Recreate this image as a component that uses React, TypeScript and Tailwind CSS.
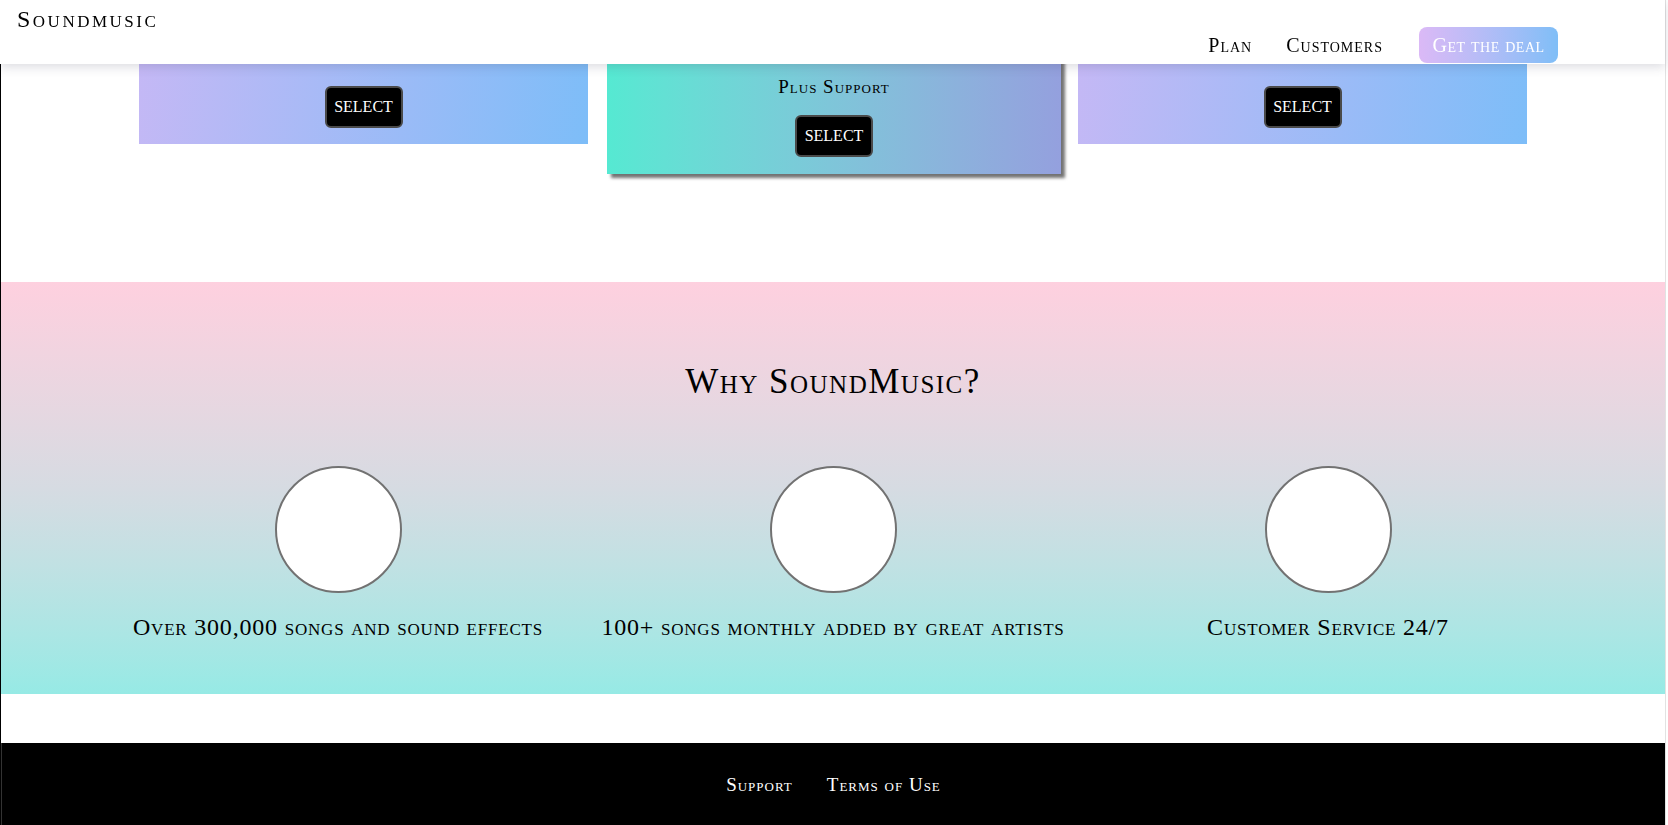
import React from 'react';

const serif = "font-['Liberation_Serif','DejaVu_Serif',serif] [font-variant:small-caps]";

const features = [
  'Over 300,000 songs and sound effects',
  '100+ songs monthly added by great artists',
  'Customer Service 24/7',
];

const SelectButton = () => (
  <button className="h-[42px] w-[78px] rounded-md border-2 border-[#4a4a4a] bg-black text-[16px] uppercase leading-none text-white">
    select
  </button>
);

const Header = () => (
  <header className="fixed left-0 top-0 z-10 flex h-16 w-[1665px] items-start justify-between bg-white pl-[17px] pr-[107px] shadow-[0_3px_10px_rgba(60,60,90,0.18)]">
    <div className="mt-[3px] text-[24px] leading-8 tracking-[2.5px] text-black">Soundmusic</div>
    <nav className="mt-[27px] flex items-center">
      <a className="text-[20px] leading-9 tracking-[1px] text-black">Plan</a>
      <a className="ml-[34px] text-[20px] leading-9 tracking-[1px] text-black">Customers</a>
      <a className="ml-9 flex h-9 w-[139px] items-center justify-center rounded-lg bg-gradient-to-r from-[#dbb9f6] to-[#7fbef7] text-[20px] tracking-[0.5px] text-white">
        Get the deal
      </a>
    </nav>
  </header>
);

const PlanCards = () => (
  <section className="flex items-start justify-center">
    <div className="flex h-[144px] w-[449px] flex-col items-center justify-end bg-[linear-gradient(100deg,#c6b8f5,#7dbdf8)] pb-4">
      <p className="mb-[22px] text-[17px] leading-5">Unlimited Songs</p>
      <SelectButton />
    </div>
    <div className="ml-[19px] flex h-[174px] w-[454px] flex-col items-center justify-end bg-gradient-to-r from-[#55e9d2] to-[#94a0de] pb-[17px] shadow-[4px_4px_3px_rgba(0,0,0,0.55)]">
      <p className="mb-3 text-[19px] leading-5 tracking-[1px]">Unlimited Songs and Playlists</p>
      <p className="mb-[18px] text-[19px] leading-5 tracking-[1px]">Plus Support</p>
      <SelectButton />
    </div>
    <div className="ml-[17px] flex h-[144px] w-[449px] flex-col items-center justify-end bg-[linear-gradient(100deg,#c6b8f5,#7dbdf8)] pb-4">
      <SelectButton />
    </div>
  </section>
);

const WhySection = () => (
  <section className="mt-[108px] h-[412px] bg-gradient-to-b from-[#fed0df] via-[#d6dbe2] to-[#96eae5] pt-[80px]">
    <h2 className="text-center text-[35px] leading-10 tracking-[1.5px] text-black">Why SoundMusic?</h2>
    <div className="mx-auto mt-[64px] grid w-[1485px] grid-cols-3">
      {features.map((f) => (
        <div key={f} className="flex flex-col items-center">
          <div className="h-[127px] w-[127px] rounded-full border-2 border-[#727272] bg-white" />
          <p className="mt-5 whitespace-nowrap text-[24px] leading-7 tracking-[0.8px] text-black">{f}</p>
        </div>
      ))}
    </div>
  </section>
);

const Footer = () => (
  <footer className="mt-[49px] flex h-[84px] items-center justify-center border-l border-[#333] bg-black">
    <a className="mr-[34px] text-[19px] tracking-[1px] text-white">Support</a>
    <a className="text-[19px] tracking-[1px] text-white">Terms of Use</a>
  </footer>
);

export default function App() {
  return (
    <div className={`flex min-h-[825px] bg-white ${serif}`}>
      <div className="w-[1665px] border-l border-black">
        <Header />
        <PlanCards />
        <WhySection />
        <Footer />
      </div>
      <div className="w-px bg-[#e2e2e2]" />
    </div>
  );
}
